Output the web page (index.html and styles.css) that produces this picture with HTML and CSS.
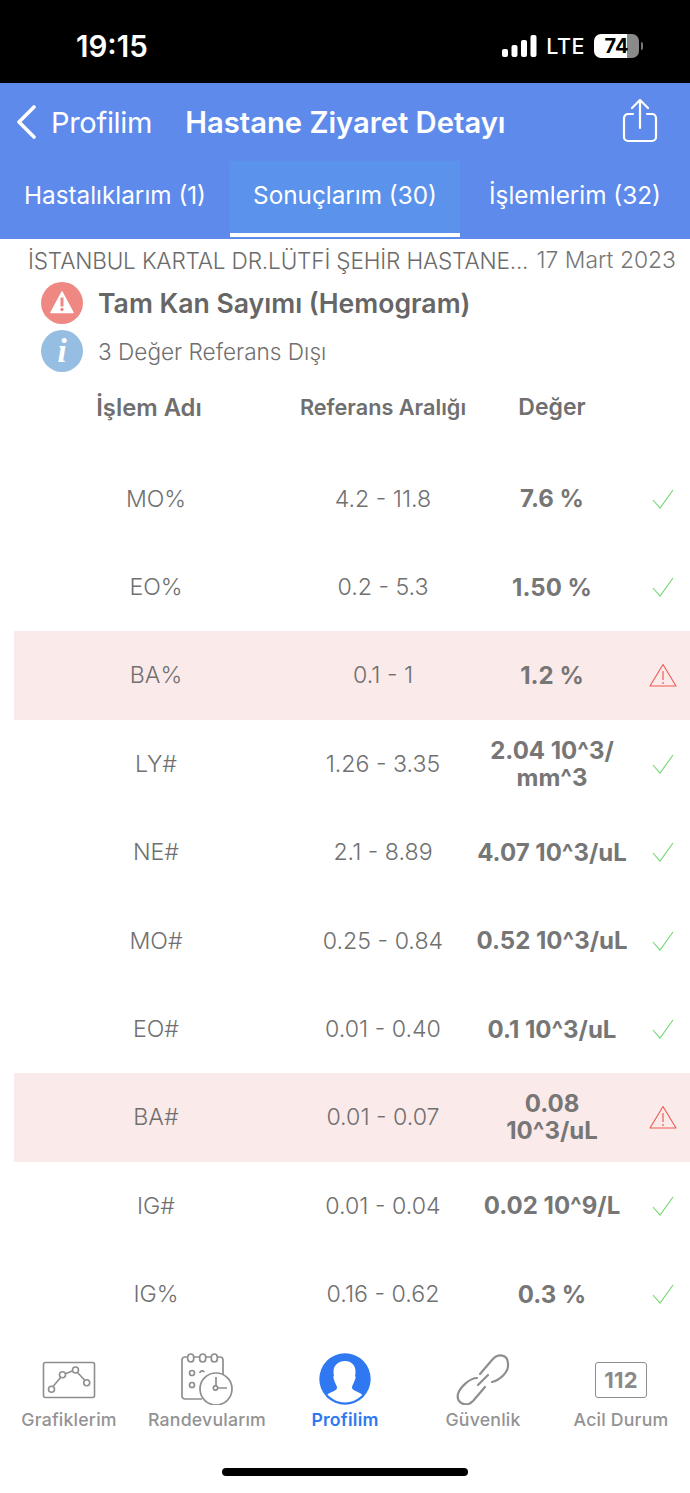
FILE: index.html
```html
<!DOCTYPE html>
<html lang="tr">
<head>
<meta charset="utf-8">
<title>Hastane Ziyaret Detayı</title>
<link rel="stylesheet" href="styles.css">
</head>
<body>
<div class="app">
  <div class="status">
    <span class="time">19:15</span>
    <div class="status-right">
      <svg class="signal" width="35" height="22" viewBox="0 0 35 22"><rect x="0" y="14" width="6" height="8" rx="2"/><rect x="9.500" y="10" width="6" height="12" rx="2"/><rect x="19" y="5" width="6" height="17" rx="2"/><rect x="28.500" y="0" width="6" height="22" rx="2"/></svg>
      <span class="lte">LTE</span>
      <div class="battery"><div class="batt-body"><span class="batt-num">74</span></div><div class="batt-tip"></div></div>
    </div>
  </div>
  <header class="nav">
    <svg class="back" width="22" height="34" viewBox="0 0 22 34"><path d="M19 2 4 17l15 15" fill="none" stroke="#fff" stroke-width="3.600" stroke-linecap="round" stroke-linejoin="round"/></svg>
    <span class="back-label">Profilim</span>
    <span class="nav-title">Hastane Ziyaret Detayı</span>
    <svg class="share" width="36" height="44" viewBox="0 0 36 44"><path d="M11 15H6a4 4 0 0 0-4 4v19a4 4 0 0 0 4 4h24a4 4 0 0 0 4-4V19a4 4 0 0 0-4-4h-5M18 29V2M10 9l8-8 8 8" fill="none" stroke="#fff" stroke-width="2.200" stroke-linecap="round" stroke-linejoin="round"/></svg>
  </header>
  <nav class="tabs">
    <div class="tab">Hastalıklarım (1)</div>
    <div class="tab active">Sonuçlarım (30)</div>
    <div class="tab">İşlemlerim (32)</div>
  </nav>
  <main class="content">
    <div class="meta"><span class="hospital">İSTANBUL KARTAL DR.LÜTFİ ŞEHİR HASTANE...</span><span class="date">17 Mart 2023</span></div>
    <div class="summary">
      <div class="sum-row">
        <svg class="badge" width="42" height="42" viewBox="0 0 42 42"><circle cx="21" cy="21" r="21" fill="#ef8783"/><path d="M21 10 32 30.500H10Z" fill="#fff" stroke="#fff" stroke-width="1.500" stroke-linejoin="round"/><rect x="19.500" y="15.500" width="3" height="9" fill="#ef8783"/><circle cx="21" cy="27.500" r="1.700" fill="#ef8783"/></svg>
        <span class="sum-title">Tam Kan Sayımı (Hemogram)</span>
      </div>
      <div class="sum-row">
        <div class="badge info">i</div>
        <span class="sum-sub">3 Değer Referans Dışı</span>
      </div>
    </div>
    <div class="thead">
      <span class="th-name">İşlem Adı</span>
      <span class="th-ref">Referans Aralığı</span>
      <span class="th-val">Değer</span>
    </div>
    <div class="rows">
      <div class="row"><span>MO%</span><span>4.2 - 11.8</span><b>7.6 %</b><svg class="ok" width="24" height="22" viewBox="0 0 24 22"><path d="M2 12l7 8L22 2" fill="none" stroke="#72d672" stroke-width="1.100"/></svg></div>
      <div class="row"><span>EO%</span><span>0.2 - 5.3</span><b>1.50 %</b><svg class="ok" width="24" height="22" viewBox="0 0 24 22"><path d="M2 12l7 8L22 2" fill="none" stroke="#72d672" stroke-width="1.100"/></svg></div>
      <div class="row bad"><span>BA%</span><span>0.1 - 1</span><b>1.2 %</b><svg class="warn" width="28" height="24" viewBox="0 0 28 24"><path d="M14 1.500 27 23H1Z" fill="none" stroke="#ee5a52" stroke-width="1.100" stroke-linejoin="round"/><path d="M14 8v9M14 19v2" stroke="#ee5a52" stroke-width="1.200"/></svg></div>
      <div class="row"><span>LY#</span><span>1.26 - 3.35</span><b>2.04 10^3/<br>mm^3</b><svg class="ok" width="24" height="22" viewBox="0 0 24 22"><path d="M2 12l7 8L22 2" fill="none" stroke="#72d672" stroke-width="1.100"/></svg></div>
      <div class="row"><span>NE#</span><span>2.1 - 8.89</span><b>4.07 10^3/uL</b><svg class="ok" width="24" height="22" viewBox="0 0 24 22"><path d="M2 12l7 8L22 2" fill="none" stroke="#72d672" stroke-width="1.100"/></svg></div>
      <div class="row"><span>MO#</span><span>0.25 - 0.84</span><b>0.52 10^3/uL</b><svg class="ok" width="24" height="22" viewBox="0 0 24 22"><path d="M2 12l7 8L22 2" fill="none" stroke="#72d672" stroke-width="1.100"/></svg></div>
      <div class="row"><span>EO#</span><span>0.01 - 0.40</span><b>0.1 10^3/uL</b><svg class="ok" width="24" height="22" viewBox="0 0 24 22"><path d="M2 12l7 8L22 2" fill="none" stroke="#72d672" stroke-width="1.100"/></svg></div>
      <div class="row bad"><span>BA#</span><span>0.01 - 0.07</span><b>0.08<br>10^3/uL</b><svg class="warn" width="28" height="24" viewBox="0 0 28 24"><path d="M14 1.500 27 23H1Z" fill="none" stroke="#ee5a52" stroke-width="1.100" stroke-linejoin="round"/><path d="M14 8v9M14 19v2" stroke="#ee5a52" stroke-width="1.200"/></svg></div>
      <div class="row"><span>IG#</span><span>0.01 - 0.04</span><b>0.02 10^9/L</b><svg class="ok" width="24" height="22" viewBox="0 0 24 22"><path d="M2 12l7 8L22 2" fill="none" stroke="#72d672" stroke-width="1.100"/></svg></div>
      <div class="row"><span>IG%</span><span>0.16 - 0.62</span><b>0.3 %</b><svg class="ok" width="24" height="22" viewBox="0 0 24 22"><path d="M2 12l7 8L22 2" fill="none" stroke="#72d672" stroke-width="1.100"/></svg></div>
    </div>
  </main>
  <footer class="bottom">
    <div class="bar">
      <div class="item">
        <svg class="ico" width="54" height="52" viewBox="0 0 54 52"><g fill="none" stroke="#8e8e8e" stroke-width="1.600"><rect x="1.500" y="9.500" width="51" height="35" rx="2"/><path d="M11 33.500 19 24M23.500 20.800l7.500-3M35.500 19.500l7.500 8"/><circle cx="9.500" cy="36.300" r="3"/><circle cx="20.500" cy="21.700" r="3"/><circle cx="33.500" cy="17" r="3"/><circle cx="44.700" cy="29.700" r="3"/></g></svg>
        <span>Grafiklerim</span>
      </div>
      <div class="item">
        <svg class="ico" width="54" height="52" viewBox="0 0 54 52"><g fill="none" stroke="#8e8e8e" stroke-width="1.700"><path d="M22 46H5a3 3 0 0 1-3-3V7a3 3 0 0 1 3-3h2.500M14 4h5.500M26 4h5M38 4h2a3 3 0 0 1 3 3v15"/><rect x="7.700" y="1" width="6" height="8" rx="3"/><rect x="19.700" y="1" width="6" height="8" rx="3"/><rect x="31.300" y="1" width="6" height="8" rx="3"/><circle cx="12" cy="20" r="2.500"/><path d="M19.800 20a2.500 2.500 0 0 1 4.600-1"/><circle cx="12" cy="32" r="2.500"/><circle cx="36" cy="36" r="16" fill="#fff"/><path d="M36 24v9M38 35h9"/><circle cx="35.500" cy="35" r="2.200"/></g></svg>
        <span>Randevularım</span>
      </div>
      <div class="item current">
        <svg class="ico" width="54" height="52" viewBox="0 0 54 52"><defs><clipPath id="pc"><circle cx="27" cy="26" r="23.500"/></clipPath></defs><circle cx="27" cy="26" r="25.700" fill="#2f78f2"/><g clip-path="url(#pc)"><path d="M27 8c6.500 0 10.500 4.500 10.500 10.500 0 1 0 3-.5 4.500l.8 1.200-1.300 3.800c-1 3-2.500 4.500-2.500 6.500 0 2 2 2.800 4 3.800 3.500 1.500 7 3 8 6.500v12H7V45c1-3.500 4.500-5 8-6.500 2-1 4-1.800 4-3.800 0-2-1.500-3.500-2.500-6.500L15.200 24l.8-1.200c-.5-1.500-.5-3.500-.5-4.300C15.500 12.500 20.500 8 27 8Z" fill="#fff"/></g></svg>
        <span>Profilim</span>
      </div>
      <div class="item">
        <svg class="ico" width="54" height="52" viewBox="0 0 54 52"><g fill="none" stroke="#8e8e8e" stroke-width="2.200" stroke-linecap="round"><path d="M24 21 36 7C42 0 52 1 52 11 53 19 44 27 36 29"/><path d="M21 25C14 25 4 34 2 41 0 50 10 55 17 48L29 34"/><path d="M22 32 32 22"/></g></svg>
        <span>Güvenlik</span>
      </div>
      <div class="item">
        <div class="ico box112"><span class="n112">112</span></div>
        <span>Acil Durum</span>
      </div>
    </div>
    <div class="home"></div>
  </footer>
</div>
</body>
</html>
```
FILE: styles.css
```css
* { box-sizing: border-box; }
html, body { margin: 0; padding: 0; background: #fff; }
body { font-family: Inter, "Liberation Sans", sans-serif; }
.app { width: 690px; height: 1493px; overflow: hidden; display: flex; flex-direction: column; }

.status { height: 83px; background: #000; color: #fff; display: flex; align-items: center; justify-content: space-between; padding: 16px 47px 8px 76px; flex: none; }
.time { font-size: 29.500px; font-weight: 600; }
.status-right { display: flex; align-items: center; gap: 9px; }
.signal { fill: #fff; }
.lte { font-size: 21.500px; font-weight: 500; letter-spacing: 0.5px; }
.battery { display: flex; align-items: center; gap: 2px; }
.batt-body { width: 45px; height: 24px; border-radius: 7px; background: linear-gradient(90deg, #fff 0 74%, #8a8a8a 74%); color: #000; display: flex; align-items: center; justify-content: center; }
.batt-num { font-size: 20px; font-weight: 700; }
.batt-tip { width: 2px; height: 8px; background: #777; border-radius: 0 2px 2px 0; }

.nav { height: 78px; background: #5e8aec; color: #fff; display: flex; align-items: center; padding: 0 32px 0 15px; flex: none; }
.back { flex: none; }
.back-label { font-size: 29px; font-weight: 400; margin-left: 14px; letter-spacing: -0.3px; }
.nav-title { font-size: 29.200px; font-weight: 600; margin-left: 33px; flex: 1; }
.share { flex: none; margin-top: -3px; }

.tabs { height: 78px; background: #5e8aec; color: #fff; display: grid; grid-template-columns: 230px 230px 230px; flex: none; font-size: 24.300px; }
.tab { display: flex; align-items: center; justify-content: center; height: 76px; white-space: nowrap; padding-bottom: 5px; border-bottom: 4px solid transparent; }
.active { background: #5b92ec; border-bottom-color: #fff; }

.content { flex: 1; min-height: 0; overflow: hidden; color: #6f6f6f; }
.meta { display: flex; justify-content: space-between; align-items: center; padding: 2px 14px 0 28px; height: 40px; color: #6b6b6b; white-space: nowrap; font-weight: 300; }
.date { font-size: 22.900px; font-weight: 300; color: #777; }
.hospital { font-size: 22.600px; letter-spacing: -0.17px; }
.summary { padding: 3px 0 0 41px; display: flex; flex-direction: column; gap: 6px; }
.sum-row { display: flex; align-items: center; gap: 15px; height: 42px; }
.badge { width: 42px; height: 42px; flex: none; }
.info { border-radius: 50%; background: #96bee2; color: #fff; display: flex; align-items: center; justify-content: center; font: italic 700 33px "Liberation Serif", serif; }
.sum-title { font-size: 26.600px; font-weight: 600; color: #666; }
.sum-sub { font-size: 22.600px; font-weight: 300; color: #6f6f6f; }

.thead { display: grid; grid-template-columns: 284px 170px 168px; margin-left: 14px; height: 40px; margin-top: 15px; align-items: center; font-weight: 600; color: #6f6f6f; }
.th-name { font-size: 23.800px; padding-right: 14px; text-align: center; }
.th-ref { font-size: 21.700px; text-align: center; white-space: nowrap; }
.th-val { font-size: 23px; text-align: center; }

.rows { margin: 27.500px 0 0 14px; }
.row { display: grid; grid-template-columns: 284px 170px 168px 54px; height: 88.400px; align-items: center; justify-items: center; font-size: 23.200px; font-weight: 300; color: #707070; text-align: center; }
.row b { font-weight: 700; font-size: 24px; line-height: 27px; color: #767676; white-space: nowrap; }
.bad { background: #fbeaea; }

.bottom { flex: none; height: 155px; background: #fff; display: flex; flex-direction: column; }
.bar { display: grid; grid-template-columns: repeat(5, 138px); padding-top: 15px; }
.item { display: flex; flex-direction: column; align-items: center; color: #939393; font-size: 17.700px; font-weight: 500; letter-spacing: 0.2px; }
.item .ico { height: 52px; margin-bottom: 4px; }
.current { color: #2f78f2; font-weight: 600; }
.box112 { width: 52px; height: 36px !important; margin-top: 9px; margin-bottom: 11px !important; border: 1.800px solid #8e8e8e; border-radius: 3px; display: flex; align-items: center; justify-content: center; }
.n112 { font-size: 22px; font-weight: 700; color: #8a8a8a; }
.home { width: 246px; height: 8px; border-radius: 4px; background: #000; margin: 38px auto 0; }
```
